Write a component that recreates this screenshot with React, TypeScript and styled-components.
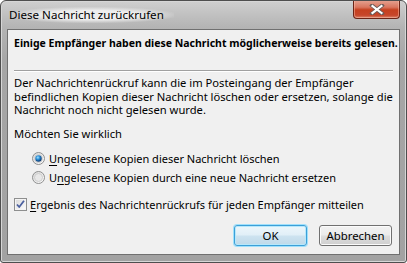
import React, { useState } from 'react';
import styled, { createGlobalStyle } from 'styled-components';

const GlobalStyle = createGlobalStyle`
  html, body {
    margin: 0;
    padding: 0;
    background: #ffffff;
  }
  body {
    font-family: "Noto Sans", "Liberation Sans", sans-serif;
    font-size: 11.2px;
    color: #000000;
  }
`;

const Window = styled.div`
  box-sizing: border-box;
  width: 407px;
  height: 263px;
  display: flex;
  flex-direction: column;
  border: 1px solid #4e4e4e;
  border-radius: 6px 6px 3px 3px;
  background: linear-gradient(to bottom, #cfcfcf 0px, #b4b4b4 26px, #a6a6a6 60px, #a2a2a2 100%);
  box-shadow: inset 0 0 0 1px #d6d6d6;
  overflow: hidden;
  white-space: nowrap;
`;

const TitleBar = styled.div`
  height: 28px;
  display: flex;
  align-items: flex-start;
  justify-content: space-between;
  padding: 0 6px 0 8px;
`;

const Title = styled.span`
  margin-top: 6px;
  padding: 0 10px 0 0;
  font-size: 11.6px;
  line-height: 16px;
  background: radial-gradient(ellipse at center, rgba(240, 240, 240, 0.95) 40%, rgba(230, 230, 230, 0) 75%);
`;

const CloseButton = styled.button`
  box-sizing: border-box;
  width: 47px;
  height: 19px;
  margin-top: -1px;
  padding: 0;
  display: flex;
  align-items: center;
  justify-content: center;
  border: 1px solid #6b2416;
  border-top: none;
  border-radius: 0 0 4px 4px;
  background: linear-gradient(to bottom, #e6a594 0%, #d9765f 40%, #c5401f 55%, #c7462a 85%, #d9866f 100%);
  box-shadow: inset 0 0 0 1px rgba(255, 200, 180, 0.45);
`;

const Client = styled.div`
  flex: 1;
  margin: 0 6px 7px 6px;
  display: flex;
  flex-direction: column;
  padding: 6px 6px 0 6px;
  border: 1px solid #707070;
  background: #f0f0f0;
`;

const Heading = styled.div`
  font-weight: bold;
  font-size: 10.5px;
  line-height: 14px;
`;

const Separator = styled.div`
  height: 0;
  margin-top: 20px;
  border-top: 1px solid #a0a0a0;
  border-bottom: 1px solid #ffffff;
`;

const Paragraph = styled.p`
  margin: 4px 0 0 0;
  line-height: 13.7px;
`;

const Question = styled.div`
  margin-top: 10px;
  line-height: 14px;
`;

const OptionList = styled.div`
  margin-top: 8px;
  padding-left: 18px;
  display: flex;
  flex-direction: column;
`;

const OptionRow = styled.label`
  height: 19px;
  display: flex;
  align-items: center;
  gap: 4px;
  font-size: 11px;
`;

const CheckRow = styled(OptionRow)`
  margin-top: 8px;
  gap: 3px;
`;

const Key = styled.span`
  text-decoration: underline;
  text-underline-offset: 2px;
`;

const ButtonRow = styled.div`
  margin-top: 11px;
  display: flex;
  justify-content: flex-end;
  gap: 12px;
  padding-right: 1px;
`;

const DialogButton = styled.button<{ $default?: boolean }>`
  box-sizing: border-box;
  width: 73px;
  height: 21px;
  padding: 0;
  font-family: inherit;
  font-size: 11.4px;
  color: #000000;
  border-radius: 3px;
  border: 1px solid ${(p) => (p.$default ? '#3c9fd8' : '#707070')};
  background: ${(p) =>
    p.$default
      ? 'linear-gradient(to bottom, #edf6fb 0%, #e1eff7 48%, #cde3f0 52%, #bfd9e9 100%)'
      : 'linear-gradient(to bottom, #f2f2f2 0%, #ebebeb 48%, #dddddd 52%, #cfcfcf 100%)'};
  box-shadow: ${(p) =>
    p.$default ? '0 0 0 1px #9fe0fb, inset 0 0 0 1px #b6e8fb' : 'inset 0 0 0 1px #fbfbfb'};
`;

const Radio = ({ checked }: { checked: boolean }) => (
  <svg width="13" height="13" viewBox="0 0 13 13">
    <defs>
      <linearGradient id="rring" x1="0" y1="0" x2="1" y2="1">
        <stop offset="0" stopColor="#d6d6d6" />
        <stop offset="1" stopColor="#ffffff" />
      </linearGradient>
      <radialGradient id="rdot" cx="0.4" cy="0.35" r="0.6">
        <stop offset="0" stopColor="#9fe2ff" />
        <stop offset="0.5" stopColor="#2a8ed6" />
        <stop offset="1" stopColor="#0d3f7a" />
      </radialGradient>
    </defs>
    <circle cx="6.5" cy="6.5" r="6" fill="url(#rring)" stroke="#8e8f8f" strokeWidth="1" />
    <circle cx="6.5" cy="6.5" r="4" fill="#e8e8e8" stroke="#c6c6c6" strokeWidth="0.8" />
    {checked && <circle cx="6.5" cy="6.5" r="3.2" fill="url(#rdot)" />}
  </svg>
);

const CheckBox = ({ checked }: { checked: boolean }) => (
  <svg width="13" height="13" viewBox="0 0 13 13">
    <defs>
      <linearGradient id="cbg" x1="0" y1="0" x2="1" y2="1">
        <stop offset="0" stopColor="#dcdcdc" />
        <stop offset="1" stopColor="#fbfbfb" />
      </linearGradient>
    </defs>
    <rect x="0.5" y="0.5" width="12" height="12" fill="#f4f4f4" stroke="#8e8f8f" />
    <rect x="2" y="2" width="9" height="9" fill="url(#cbg)" />
    {checked && (
      <path d="M3 6.5 L5.2 9 L10 2.8" fill="none" stroke="#4c61a0" strokeWidth="1.8" strokeLinejoin="round" />
    )}
  </svg>
);

const CloseGlyph = () => (
  <svg width="16" height="11" viewBox="0 0 16 11">
    <path
      d="M3 1.5 L13 9.5 M13 1.5 L3 9.5"
      stroke="#6a5a58"
      strokeWidth="3.8"
      strokeLinecap="square"
      fill="none"
    />
    <path
      d="M3.5 2 L12.5 9 M12.5 2 L3.5 9"
      stroke="#ffffff"
      strokeWidth="2.2"
      strokeLinecap="square"
      fill="none"
    />
  </svg>
);

const App: React.FC = () => {
  const [choice] = useState<'delete' | 'replace'>('delete');
  const [notify] = useState(true);

  return (
    <>
      <GlobalStyle />
      <Window>
        <TitleBar>
          <Title>Diese Nachricht zurückrufen</Title>
          <CloseButton aria-label="Schließen">
            <CloseGlyph />
          </CloseButton>
        </TitleBar>
        <Client>
          <Heading>Einige Empfänger haben diese Nachricht möglicherweise bereits gelesen.</Heading>
          <Separator />
          <Paragraph>
            Der Nachrichtenrückruf kann die im Posteingang der Empfänger
            <br />
            befindlichen Kopien dieser Nachricht löschen oder ersetzen, solange die
            <br />
            Nachricht noch nicht gelesen wurde.
          </Paragraph>
          <Question>Möchten Sie wirklich</Question>
          <OptionList>
            <OptionRow>
              <Radio checked={choice === 'delete'} />
              <span>
                <Key>U</Key>ngelesene Kopien dieser Nachricht löschen
              </span>
            </OptionRow>
            <OptionRow>
              <Radio checked={choice === 'replace'} />
              <span>
                U<Key>n</Key>gelesene Kopien durch eine neue Nachricht ersetzen
              </span>
            </OptionRow>
          </OptionList>
          <CheckRow>
            <CheckBox checked={notify} />
            <span>
              <Key>E</Key>rgebnis des Nachrichtenrückrufs für jeden Empfänger mitteilen
            </span>
          </CheckRow>
          <ButtonRow>
            <DialogButton $default>OK</DialogButton>
            <DialogButton>Abbrechen</DialogButton>
          </ButtonRow>
        </Client>
      </Window>
    </>
  );
};

export default App;
